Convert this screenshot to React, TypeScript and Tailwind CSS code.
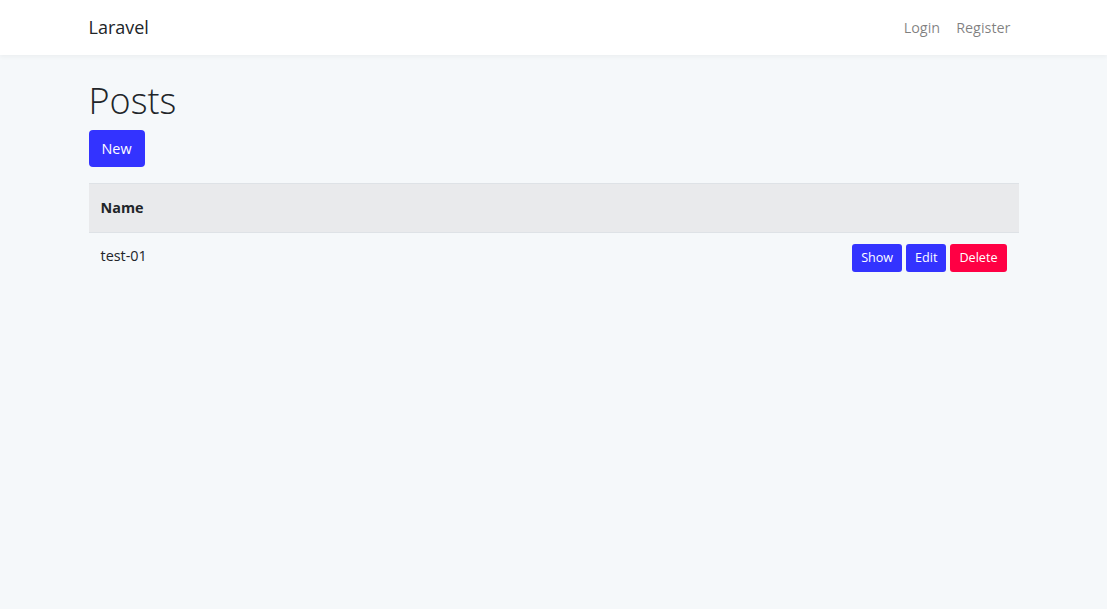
import React from "react";

export default function App() {
  return (
    <div className="min-h-[609px] bg-[#f5f8fa] text-[#212529]" style={{ fontFamily: '"Open Sans", "Noto Sans", sans-serif' }}>
      <nav className="h-[55px] bg-white shadow-[0_2px_4px_rgba(0,0,0,0.04)]">
        <div className="mx-auto flex h-full w-[960px] items-center justify-between px-[15px]">
          <span className="text-[18px] font-normal text-[#212529]">Laravel</span>
          <div className="flex text-[14.4px] text-[rgba(0,0,0,0.5)]">
            <span className="px-2">Login</span>
            <span className="px-2">Register</span>
          </div>
        </div>
      </nav>
      <main className="mx-auto w-[960px] px-[15px] py-6">
        <h1 className="mb-2 text-[36px] font-light leading-[1.2] text-[#212529]">Posts</h1>
        <button className="h-[37px] rounded-[4px] bg-[#3333ff] px-[13px] text-[14.4px] text-white">New</button>
        <table className="mt-4 w-full border-collapse text-[14.4px]">
          <thead>
            <tr className="bg-[#e9eaec]">
              <th className="h-[49px] border-t border-b border-[#dee2e6] px-3 text-left font-bold">Name</th>
              <th className="border-t border-b border-[#dee2e6]"></th>
            </tr>
          </thead>
          <tbody>
            <tr>
              <td className="px-3 align-top pt-[12px]">test-01</td>
              <td className="px-3 pt-[11px] pb-3 align-top">
                <div className="flex justify-end gap-1">
                  <button className="h-[28px] rounded-[3px] bg-[#3333ff] px-[9px] text-[12.6px] text-white">Show</button>
                  <button className="h-[28px] rounded-[3px] bg-[#3333ff] px-[9px] text-[12.6px] text-white">Edit</button>
                  <button className="h-[28px] rounded-[3px] bg-[#ff0044] px-[9px] text-[12.6px] text-white">Delete</button>
                </div>
              </td>
            </tr>
          </tbody>
        </table>
      </main>
    </div>
  );
}
